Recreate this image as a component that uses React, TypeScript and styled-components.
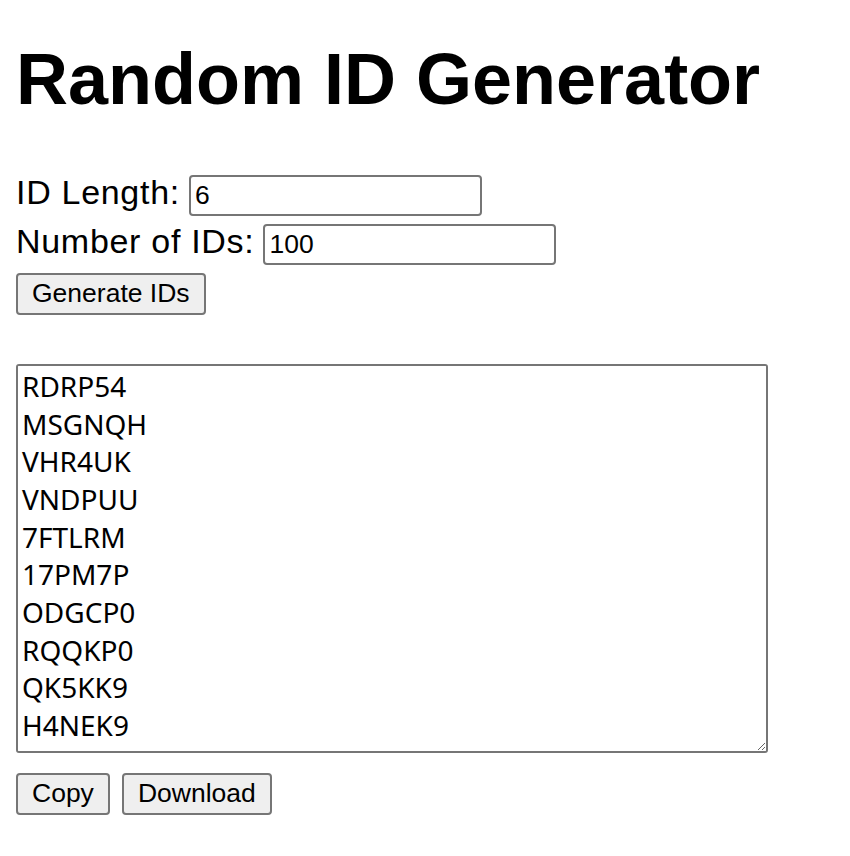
import { useState } from 'react'
import styled, { createGlobalStyle } from 'styled-components'

const GlobalStyle = createGlobalStyle`
  html, body {
    margin: 0;
    padding: 0;
    background: #ffffff;
  }
  body {
    font-family: "Liberation Sans", Arial, sans-serif;
    color: #000000;
  }
`

const FIRST_IDS = [
  'RDRP54',
  'MSGNQH',
  'VHR4UK',
  'VNDPUU',
  '7FTLRM',
  '17PM7P',
  'ODGCP0',
  'RQQKP0',
  'QK5KK9',
  'H4NEK9',
]

const CHARS = 'ABCDEFGHIJKLMNOPQRSTUVWXYZ0123456789'

// small seeded generator so the list is the same on every render
function makeIds(length: number, count: number) {
  let seed = 1337
  const next = () => {
    seed = (seed * 16807) % 2147483647
    return seed
  }
  const ids = FIRST_IDS.slice(0, count)
  while (ids.length < count) {
    let id = ''
    for (let i = 0; i < length; i++) id += CHARS[next() % CHARS.length]
    ids.push(id)
  }
  return ids
}

export default function App() {
  const [length, setLength] = useState('6')
  const [count, setCount] = useState('100')
  const [output, setOutput] = useState(() => makeIds(6, 100).join('\n'))

  const generate = () => {
    setOutput(makeIds(Number(length) || 6, Number(count) || 100).join('\n'))
  }

  return (
    <Page>
      <GlobalStyle />
      <Title>Random ID Generator</Title>

      <Form>
        <Row>
          <Label htmlFor="id-length">ID Length:</Label>
          <Input id="id-length" value={length} onChange={e => setLength(e.target.value)} />
        </Row>
        <Row>
          <Label htmlFor="id-count">Number of IDs:</Label>
          <Input id="id-count" value={count} onChange={e => setCount(e.target.value)} />
        </Row>
        <ButtonRow>
          <Button onClick={generate}>Generate IDs</Button>
        </ButtonRow>
      </Form>

      <Output value={output} readOnly rows={10} />

      <Actions>
        <Button>Copy</Button>
        <Button>Download</Button>
      </Actions>
    </Page>
  )
}

const Page = styled.main`
  display: flex;
  flex-direction: column;
  align-items: flex-start;
  padding: 38px 16px 40px;
`

const Title = styled.h1`
  margin: 0;
  font-size: 72px;
  font-weight: 700;
  line-height: 1.15;
`

const Form = styled.div`
  display: flex;
  flex-direction: column;
  margin-top: 51px;
`

const Row = styled.div`
  display: flex;
  align-items: baseline;
  gap: 9px;
  height: 49px;
`

const ButtonRow = styled.div`
  display: flex;
  padding-top: 3px;
`

const Label = styled.label`
  font-size: 34px;
  letter-spacing: 0.7px;
  line-height: 40px;
`

const Input = styled.input`
  box-sizing: border-box;
  width: 293px;
  height: 41px;
  padding: 0 4px;
  border: 2px solid #767676;
  border-radius: 4px;
  font-family: "Liberation Sans", Arial, sans-serif;
  font-size: 26.5px;
  color: #000000;
  background: #ffffff;
  outline: none;
`

const Button = styled.button`
  box-sizing: border-box;
  height: 42px;
  padding: 0 14px;
  border: 2px solid #767676;
  border-radius: 4px;
  background: #efefef;
  font-family: "Liberation Sans", Arial, sans-serif;
  font-size: 26.5px;
  color: #000000;
  cursor: pointer;
`

const Output = styled.textarea`
  box-sizing: border-box;
  width: 752px;
  height: 389px;
  margin-top: 49px;
  padding: 2px 4px;
  border: 2px solid #767676;
  border-radius: 3px;
  font-family: "Noto Sans", sans-serif;
  font-size: 28px;
  line-height: 37.7px;
  color: #000000;
  background: #ffffff;
  outline: none;
`

const Actions = styled.div`
  display: flex;
  gap: 12px;
  margin-top: 20px;
`
